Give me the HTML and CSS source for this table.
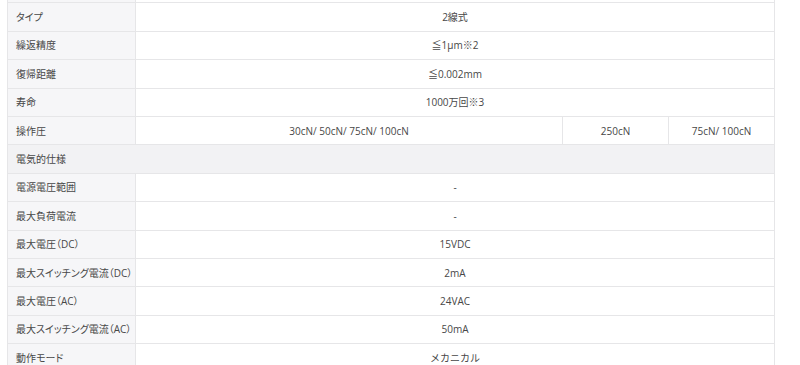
FILE: index.html
```html
<!DOCTYPE html>
<html lang="ja">
<head>
<meta charset="utf-8">
<link rel="stylesheet" href="styles.css">
</head>
<body>
<div class="wrap">
<table class="spec">
  <colgroup>
    <col class="c-label">
    <col class="c-main">
    <col class="c-sub">
    <col class="c-sub">
  </colgroup>
  <tbody>
    <tr class="cut"><th></th><td colspan="3"></td></tr>
    <tr><th>タイプ</th><td colspan="3">2線式</td></tr>
    <tr><th>繰返精度</th><td colspan="3">≦1μm※2</td></tr>
    <tr><th>復帰距離</th><td colspan="3">≦0.002mm</td></tr>
    <tr><th>寿命</th><td colspan="3">1000万回※3</td></tr>
    <tr><th>操作圧</th><td>30cN/ 50cN/ 75cN/ 100cN</td><td>250cN</td><td>75cN/ 100cN</td></tr>
    <tr class="section"><th colspan="4">電気的仕様</th></tr>
    <tr><th>電源電圧範囲</th><td colspan="3">-</td></tr>
    <tr><th>最大負荷電流</th><td colspan="3">-</td></tr>
    <tr><th>最大電圧（DC）</th><td colspan="3">15VDC</td></tr>
    <tr><th>最大スイッチング電流（DC）</th><td colspan="3">2mA</td></tr>
    <tr><th>最大電圧（AC）</th><td colspan="3">24VAC</td></tr>
    <tr><th>最大スイッチング電流（AC）</th><td colspan="3">50mA</td></tr>
    <tr><th>動作モード</th><td colspan="3">メカニカル</td></tr>
  </tbody>
</table>
</div>
</body>
</html>
```
FILE: styles.css
```css
html, body {
  margin: 0;
  padding: 0;
  background: #fff;
}
body {
  font-family: "Open Sans", "Noto Sans CJK JP", sans-serif;
  font-size: 10px;
  color: #474747;
  overflow: hidden;
}
.wrap {
  padding-left: 7px;
  width: 768px;
  margin-top: -26px;
}
.spec {
  border-collapse: collapse;
  table-layout: fixed;
  width: 768px;
}
.c-label { width: 128px; }
.c-main { width: 427px; }
.c-sub { width: 106px; }
.spec tr { height: 28.4px; }
.spec th, .spec td {
  border: 1px solid #e6e6e8;
  padding: 0 8px;
  line-height: 14px;
  white-space: nowrap;
}
.spec th {
  background: #f6f6f8;
  font-weight: normal;
  text-align: left;
  font-feature-settings: "palt";
}
.spec td {
  text-align: center;
  background: #fff;
}
.spec .section th {
  background: #f2f2f4;
}
```
